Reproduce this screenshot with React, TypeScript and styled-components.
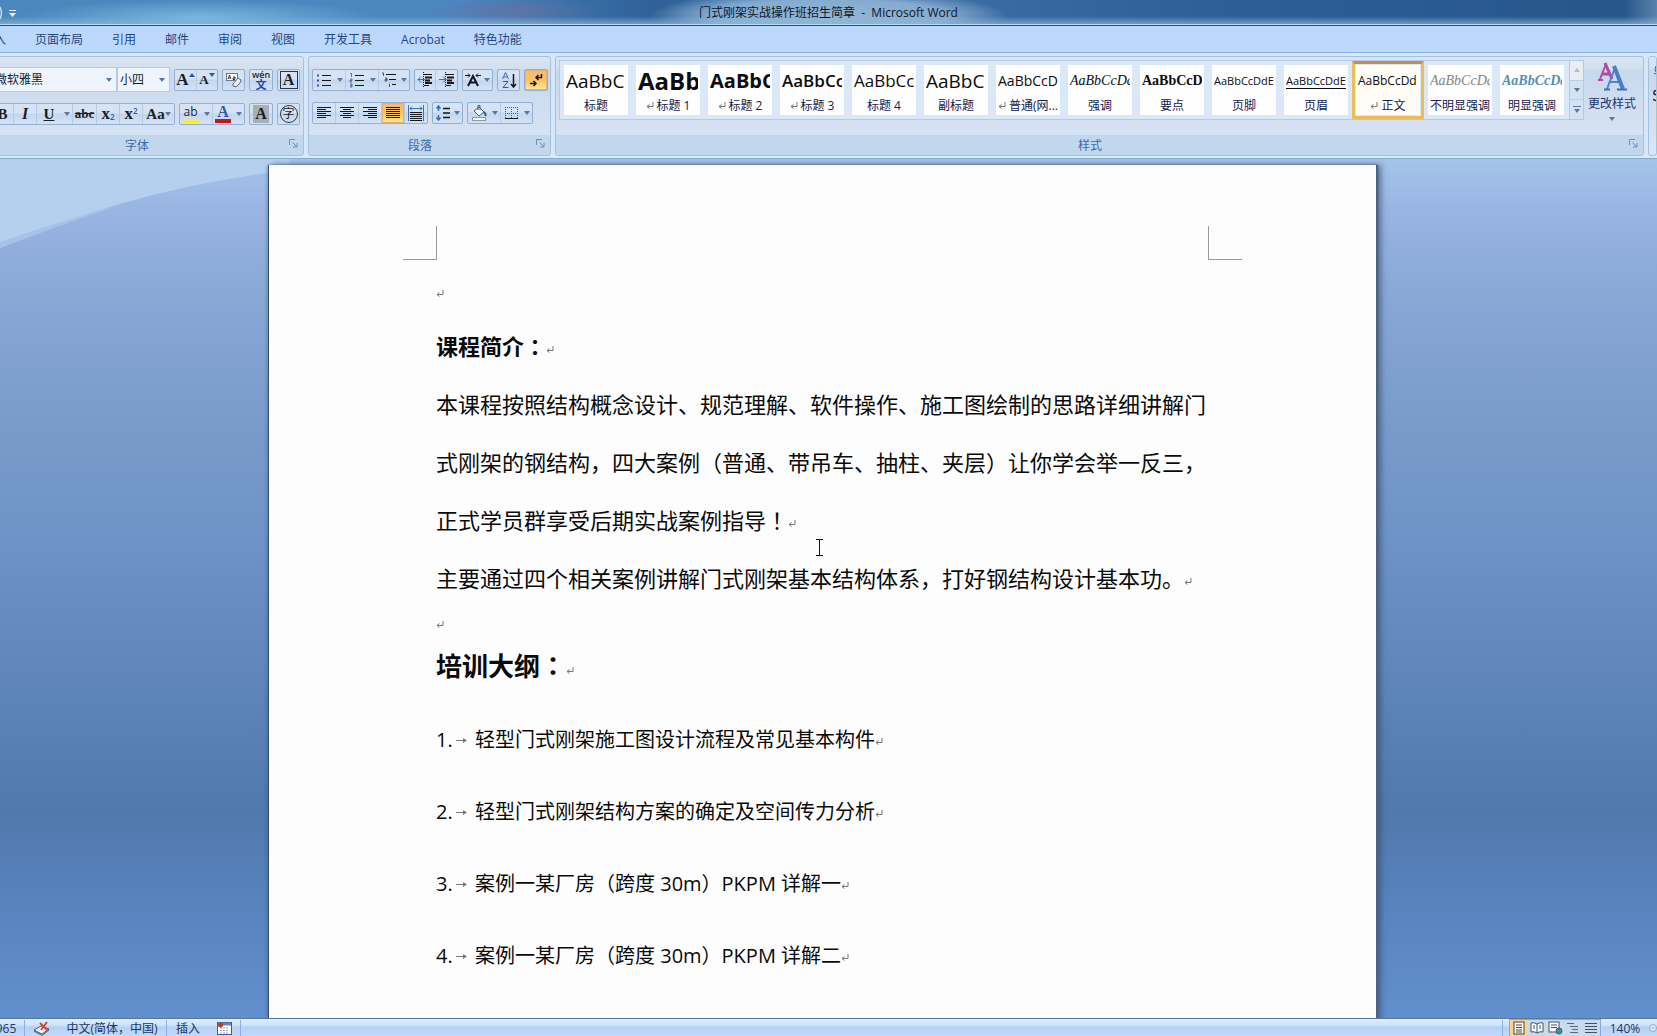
import React from "react";
import styled, { createGlobalStyle, css } from "styled-components";

const ui = `"Open Sans", "Noto Sans CJK SC", sans-serif`;
const serif = `"Liberation Serif", "Noto Sans CJK SC", serif`;

const Global = createGlobalStyle`
  * { box-sizing: border-box; }
  html, body { margin: 0; height: 100%; }
  body { font-family: ${ui}; font-size: 12px; overflow: hidden; background: #628ecb; }
  button, select { font: inherit; color: inherit; margin: 0; padding: 0; border: 0; background: none; }
`;

const Window = styled.div`
  display: flex;
  flex-direction: column;
  height: 100vh;
  overflow: hidden;
`;

/* ---------- title bar and tabs ---------- */

const TitleBar = styled.header`
  display: grid;
  grid-template-columns: 1fr auto 1fr;
  align-items: end;
  flex: none;
  height: 26px;
  border-bottom: 1px solid #2a4d75;
  box-shadow: inset 0 -1px 0 #b9dcf2;
  background:
    linear-gradient(to bottom, transparent 0 65%, rgba(140, 185, 220, 0.75) 100%),
    radial-gradient(ellipse 180px 18px at 12% 70%, rgba(130, 190, 228, 0.85), transparent),
    radial-gradient(ellipse 90px 14px at 31% 45%, rgba(100, 115, 165, 0.8), transparent),
    radial-gradient(ellipse 180px 26px at 50% 65%, rgba(150, 187, 218, 0.95) 0, rgba(145, 182, 214, 0.85) 65%, transparent),
    linear-gradient(to right, #4b86bd 0, #4c86c0 28%, #3a70a8 34%, #2f6097 40%, #3c70aa 44%, #3b6ca4 58%, #2c5f96 75%, #27568a 98%, #5a83ad 100%);
`;

const QuickAccess = styled.div`
  display: flex;
  align-items: center;
  height: 24px;
`;

const WindowTitle = styled.h1`
  margin: 0;
  padding: 0 6px;
  font-size: 12px;
  line-height: 24px;
  font-weight: 400;
  color: #10161e;
  white-space: pre;
`;

const TabStrip = styled.div`
  flex: none;
  background: #bdd8fd;
  border-bottom: 1px solid #8fb2dd;
`;

const Tabs = styled.nav`
  display: flex;
  align-items: flex-end;
  gap: 29px;
  height: 26px;
  margin-left: -6px;
`;

const Tab = styled.button`
  line-height: 24px;
  color: #1f4683;
  white-space: nowrap;
`;

/* ---------- ribbon ---------- */

const Ribbon = styled.div`
  display: flex;
  flex: none;
  gap: 4px;
  height: 106px;
  padding: 3px 0 2px;
  background: #d5e7f8;
  border-bottom: 1px solid #86a9cc;
  box-shadow: inset 0 -2px 0 #d3ecf8;
`;

const Group = styled.section<{ $width?: number; $cut?: boolean }>`
  display: flex;
  flex-direction: column;
  ${(p) => (p.$width ? `flex: none; width: ${p.$width}px;` : "flex: 1; min-width: 0;")}
  ${(p) => p.$cut && "margin-left: -11px;"}
  border: 1px solid #a5c1de;
  border-radius: 3px;
  background: linear-gradient(to bottom, #dbe5f0 0, #d2dff0 12px, #c8d8ed 13px, #d9e6f5 100%);
  overflow: hidden;
`;

const GroupBody = styled.div<{ $pad: string; $gap?: number }>`
  display: flex;
  flex: 1;
  flex-direction: column;
  gap: ${(p) => p.$gap ?? 0}px;
  padding: ${(p) => p.$pad};
`;

const GroupFooter = styled.footer`
  display: flex;
  flex: none;
  height: 20px;
  padding-right: 5px;
  background: #c1d7ee;
  color: #3e68a8;
`;

const GroupName = styled.span`
  flex: 1;
  text-align: center;
  line-height: 22px;
`;

const Launcher = styled.button`
  display: flex;
  align-items: center;
  justify-content: flex-end;
  width: 14px;
  height: 16px;
`;

const Row = styled.div<{ $end?: boolean; $tall?: boolean }>`
  display: flex;
  flex: none;
  align-items: center;
  justify-content: ${(p) => (p.$end ? "flex-end" : "flex-start")};
  gap: 4px;
  height: ${(p) => (p.$tall ? 25 : 22)}px;
`;

const Cluster = styled.div`
  display: flex;
  flex: none;
  align-items: stretch;
  height: 22px;
  border: 1px solid #93afd3;
  border-radius: 2px;
  background: linear-gradient(to bottom, #d6e3f4 0 45%, #c3d6ee 50%, #d3e3f5 100%);
`;

const Tool = styled.button<{ $w?: number; $on?: boolean; $line?: boolean }>`
  display: flex;
  align-items: center;
  justify-content: center;
  width: ${(p) => p.$w ?? 22}px;
  color: #1c1c24;
  ${(p) => p.$line && "border-right: 1px solid #b5cae4;"}
  ${(p) =>
    p.$on &&
    css`
      background: linear-gradient(to bottom, #f5b878, #fdc45e 50%, #ffe9a0);
      box-shadow: inset 0 0 0 1px #e3b070;
    `}
`;

const Glyph = styled.span<{ $size: number; $ul?: boolean; $it?: boolean; $strike?: boolean; $shade?: boolean }>`
  font-family: ${serif};
  font-weight: 700;
  font-size: ${(p) => p.$size}px;
  line-height: 18px;
  white-space: nowrap;
  ${(p) => p.$it && "font-style: italic;"}
  ${(p) => p.$ul && "text-decoration: underline;"}
  ${(p) => p.$strike && "text-decoration: line-through;"}
  ${(p) => p.$shade && "background: #a9b0b4; padding: 0 2px;"}
`;

const ScriptMark = styled.span<{ $low?: boolean }>`
  display: flex;
  align-self: ${(p) => (p.$low ? "flex-end" : "flex-start")};
  padding: 3px 0;
  font-size: 8px;
  line-height: 8px;
  font-weight: 600;
  color: #2d5b9c;
`;

const Boxed = styled.span<{ $round?: boolean }>`
  display: flex;
  align-items: center;
  justify-content: center;
  width: 18px;
  height: 18px;
  border: 1px solid #26364e;
  border-radius: ${(p) => (p.$round ? "50%" : "0")};
  font-size: 12px;
  line-height: 16px;
`;

const Ruby = styled.span`
  display: flex;
  flex-direction: column;
  align-items: center;
  font-size: 9px;
  line-height: 9px;
  font-weight: 600;
  color: #22252d;
`;

const RubyBase = styled.span`
  font-size: 11px;
  line-height: 11px;
  color: #37449a;
`;

const Swatch = styled.span<{ $bar: string; $ink: string; $serif?: boolean }>`
  display: flex;
  flex-direction: column;
  align-items: center;
  width: 16px;
  border-bottom: 4px solid ${(p) => p.$bar};
  color: ${(p) => p.$ink};
  font-family: ${(p) => (p.$serif ? serif : ui)};
  font-size: ${(p) => (p.$serif ? 16 : 12)}px;
  font-weight: ${(p) => (p.$serif ? 700 : 400)};
  line-height: 14px;
`;

const Combo = styled.label<{ $w: number }>`
  display: flex;
  align-items: center;
  width: ${(p) => p.$w}px;
  height: 25px;
  padding: 0 4px 0 2px;
  background: #edf4fd;
  border: 1px solid #b5cae6;
`;

const Select = styled.select`
  appearance: none;
  flex: 1;
  min-width: 0;
  height: 22px;
  color: #151c28;
  outline: none;
`;

const Combos = styled.div`
  display: flex;
  height: 25px;
  padding-left: 2px;
`;

/* ---------- style gallery ---------- */

const StylesBody = styled.div`
  display: flex;
  flex: 1;
  padding: 3px 3px 0;
`;

const Gallery = styled.div`
  display: flex;
  flex: 1;
  min-width: 0;
  height: 60px;
  border: 1px solid #b3cae6;
  background: #dbe8f8;
`;

const Cards = styled.div`
  display: flex;
  flex: 1;
  min-width: 0;
  overflow: hidden;
`;

const Card = styled.button<{ $on?: boolean }>`
  display: flex;
  flex-direction: column;
  flex: none;
  width: 72px;
  height: 58px;
  padding: ${(p) => (p.$on ? "1px" : "4px")};
  ${(p) =>
    p.$on &&
    css`
      border: 3px solid #edbd55;
      border-top-color: #c08f55;
      border-radius: 2px;
    `}
  background: ${(p) => (p.$on ? "#fffdf6" : "#fefefe")} content-box;
  text-align: center;
`;

const Preview = styled.span<{ $size: number; $w?: number; $serif?: boolean; $it?: boolean; $color?: string; $ul?: boolean }>`
  flex: none;
  width: 60px;
  height: 32px;
  margin: 0 2px;
  overflow: hidden;
  white-space: nowrap;
  text-align: left;
  font-family: ${(p) => (p.$serif ? serif : ui)};
  font-size: ${(p) => p.$size}px;
  line-height: 32px;
  font-weight: ${(p) => p.$w ?? 400};
  font-style: ${(p) => (p.$it ? "italic" : "normal")};
  color: ${(p) => p.$color ?? "#0c0c10"};
  ${(p) => p.$ul && "text-decoration: underline; text-underline-offset: 3px;"}
`;

const CardName = styled.span`
  display: flex;
  align-items: center;
  justify-content: center;
  gap: 3px;
  line-height: 18px;
  color: #14204a;
  white-space: nowrap;
`;

const Scroller = styled.div`
  display: flex;
  flex-direction: column;
  flex: none;
  width: 14px;
  border-left: 1px solid #b3cae6;
`;

const ScrollButton = styled.button<{ $off?: boolean }>`
  display: flex;
  flex: 1;
  align-items: center;
  justify-content: center;
  border-bottom: 1px solid #b9cee8;
  background: ${(p) => (p.$off ? "#e9eef5" : "#d3e2f5")};
  &:last-child { border-bottom: 0; }
`;

const ChangeStyles = styled.button`
  display: flex;
  flex: none;
  flex-direction: column;
  align-items: center;
  width: 56px;
  padding-top: 1px;
  color: #1f3468;
  line-height: 26px;
  white-space: nowrap;
`;

const CutTools = styled.div`
  display: flex;
  flex-direction: column;
  gap: 8px;
  padding: 8px 0 0 4px;
`;

/* ---------- workspace ---------- */

const Workspace = styled.main`
  position: relative;
  display: flex;
  flex: 1;
  justify-content: center;
  min-height: 0;
  padding: 6px 13px 0 0;
  overflow: hidden;
  background: linear-gradient(to bottom, #a4c4ea 0, #97b3e2 7%, #89a9d7 15%, #7a9ccb 30%, #6e93c6 44%, #6288bb 58%, #5079ad 76%, #5a84bf 88%, #628fcd 100%);
`;

const Swoosh = styled.svg`
  position: absolute;
  top: 0;
  left: 0;
  width: 290px;
  height: 92px;
`;

const Page = styled.article`
  position: relative;
  width: 1108px;
  height: 1500px;
  padding: 98px 167px;
  background: #fdfdfd;
  border-left: 1px solid #3a4d68;
  box-shadow: 2px 0 1px #4d627d, 5px 0 6px rgba(55, 80, 120, 0.7), -1px 0 3px rgba(55, 80, 120, 0.4);
  color: #0a0a0a;
`;

const Corner = styled.span<{ $side: "left" | "right" }>`
  position: absolute;
  top: 61px;
  ${(p) => p.$side}: 134px;
  width: 34px;
  height: 34px;
  border-bottom: 1px solid #999;
  border-${(p) => (p.$side === "left" ? "right" : "left")}: 1px solid #999;
`;

const Caret = styled.svg`
  position: absolute;
  top: 374px;
  left: 546px;
  width: 9px;
  height: 17px;
`;

const Blank = styled.p<{ $h: number }>`
  display: flex;
  align-items: center;
  height: ${(p) => p.$h}px;
  margin: 0;
  padding-top: 8px;
`;

const Heading = styled.h2<{ $size: number; $line: number; $after?: number }>`
  margin: 0 0 ${(p) => p.$after ?? 0}px;
  font-size: ${(p) => p.$size}px;
  line-height: ${(p) => p.$line}px;
  font-weight: 700;
`;

const Para = styled.p`
  margin: 0;
  font-size: 22px;
  line-height: 58px;
  white-space: nowrap;
`;

const Mid = styled.span`
  font-family: "Noto Sans CJK JP", sans-serif;
  line-height: 1;
`;

const Outline = styled.ol`
  margin: 0;
  padding: 0;
  list-style: none;
`;

const Item = styled.li`
  display: grid;
  grid-template-columns: 20px 19px 1fr;
  align-items: center;
  font-size: 20px;
  line-height: 72px;
  white-space: nowrap;
`;

/* ---------- status bar ---------- */

const Status = styled.footer`
  display: flex;
  flex: none;
  justify-content: space-between;
  height: 18px;
  padding-top: 1px;
  overflow: hidden;
  border-top: 1px solid #55789f;
  background: linear-gradient(to bottom, #e2effd 0, #c9dffa 7px, #b4d0f5 8px, #c3dbf8 100%);
  color: #1b3663;
  line-height: 17px;
`;

const StatusSide = styled.div<{ $cut?: boolean }>`
  display: flex;
  align-items: center;
  white-space: nowrap;
  ${(p) => p.$cut && "margin-left: -12px;"}
`;

const StatusCell = styled.button<{ $w: number; $line?: boolean }>`
  display: flex;
  align-items: center;
  justify-content: center;
  width: ${(p) => p.$w}px;
  height: 17px;
  ${(p) => p.$line && "border-right: 1px solid #8fb0da;"}
`;

const Views = styled.div`
  display: flex;
  margin: 0 7px 0 6px;
  border: 1px solid #8ba9cf;
`;

const Divider = styled.span`
  width: 1px;
  height: 17px;
  background: #8fb0da;
`;

const ViewButton = styled.button<{ $on?: boolean }>`
  display: flex;
  align-items: center;
  justify-content: center;
  width: 18px;
  height: 17px;
  background: ${(p) => (p.$on ? "#f8d48f" : "#c9daef")};
`;

const Zoom = styled.button`
  display: flex;
  align-items: center;
  width: 8px;
  margin-left: 7px;
  overflow: hidden;
`;

/* ---------- drawings ---------- */

const Arrow = ({ color = "#5c7699", up = false }: { color?: string; up?: boolean }) => (
  <svg width="6" height="4" viewBox="0 0 6 4" aria-hidden="true">
    <path d={up ? "M0 4L3 0L6 4Z" : "M0 0H6L3 4Z"} fill={color} />
  </svg>
);

const Mark = styled.svg`
  width: 8px;
  height: 9px;
  flex: none;
`;

const Return = () => (
  <Mark viewBox="0 0 8 9" fill="none" stroke="#777" aria-hidden="true">
    <path d="M7 0V4.500H1M3.500 2.500L1 4.500L3.500 6.500" />
  </Mark>
);

const TabMark = () => (
  <svg width="12" height="8" viewBox="0 0 12 8" aria-hidden="true">
    <path d="M0 4.500H8" stroke="#777" />
    <path d="M7 2L11 4.500L7 7Z" fill="#777" />
  </svg>
);

const Icon = ({ w = 16, children }: { w?: number; children: React.ReactNode }) => (
  <svg width={w} height="16" viewBox={`0 0 ${w} 16`} fill="none" stroke="#15151c" strokeWidth="1" aria-hidden="true">
    {children}
  </svg>
);

const lines = (rows: [number, number][]) => rows.map(([a, b], i) => `M${a} ${2.5 + i * 2}H${b}`).join("");
const LEFT: [number, number][] = [[1, 15], [1, 10], [1, 15], [1, 10], [1, 15], [1, 10]];
const CENTER: [number, number][] = [[1, 15], [4, 12], [1, 15], [4, 12], [1, 15], [4, 12]];
const RIGHT: [number, number][] = [[1, 15], [6, 15], [1, 15], [6, 15], [1, 15], [6, 15]];
const FULL: [number, number][] = [[1, 15], [1, 15], [1, 15], [1, 15], [1, 15], [1, 15]];

const LauncherIcon = () => (
  <svg width="9" height="9" viewBox="0 0 9 9" fill="none" stroke="#6c8db8" aria-hidden="true">
    <path d="M.5 6V.5H6M3.500 3.500L7.500 7.500M8 4V8H4" />
  </svg>
);

const Indent = ({ out }: { out?: boolean }) => (
  <Icon>
    <path d="M7 2.500H15M7 13.500H12" />
    <path d="M8 5.500H15M8 8.500H13M8 11H15" strokeWidth="2" />
    <path d="M6.500 0V16" strokeDasharray="1 1" />
    <path d={out ? "M8 7.500H1M4 4.500L1 7.500L4 10.500" : "M0 7.500H7M4 4.500L7 7.500L4 10.500"} stroke="#3b6db0" />
  </Icon>
);

const Footer = ({ name }: { name: string }) => (
  <GroupFooter>
    <GroupName>{name}</GroupName>
    <Launcher aria-label={name}>
      <LauncherIcon />
    </Launcher>
  </GroupFooter>
);

/* ---------- data ---------- */

const tabs = ["入", "页面布局", "引用", "邮件", "审阅", "视图", "开发工具", "Acrobat", "特色功能"];

const styles = [
  { name: "标题", text: "AaBbC", size: 19 },
  { name: "标题 1", text: "AaBbC", size: 24, w: 700, para: true },
  { name: "标题 2", text: "AaBbC", size: 20, w: 700, para: true },
  { name: "标题 3", text: "AaBbCc", size: 17, w: 600, para: true },
  { name: "标题 4", text: "AaBbCc", size: 17 },
  { name: "副标题", text: "AaBbC", size: 19 },
  { name: "普通(网...", text: "AaBbCcD", size: 14, para: true },
  { name: "强调", text: "AaBbCcDd", size: 14, serif: true, it: true },
  { name: "要点", text: "AaBbCcD", size: 14, w: 700, serif: true },
  { name: "页脚", text: "AaBbCcDdE", size: 11 },
  { name: "页眉", text: "AaBbCcDdE", size: 11, ul: true },
  { name: "正文", text: "AaBbCcDd", size: 12, para: true, on: true },
  { name: "不明显强调", text: "AaBbCcDd", size: 14, serif: true, it: true, color: "#858585" },
  { name: "明显强调", text: "AaBbCcDd", size: 14, w: 700, serif: true, it: true, color: "#5590b4" },
];

const outline = [
  "轻型门式刚架施工图设计流程及常见基本构件",
  "轻型门式刚架结构方案的确定及空间传力分析",
  "案例一某厂房（跨度 30m）PKPM 详解一",
  "案例一某厂房（跨度 30m）PKPM 详解二",
];

/* ---------- parts ---------- */

const FontGroup = () => (
  <Group $width={315} $cut>
    <GroupBody $pad="10px 3px 0 0" $gap={11}>
      <Row $tall>
        <Combos>
          <Combo $w={125}>
            <Select aria-label="字体">
              <option>微软雅黑</option>
            </Select>
            <Arrow />
          </Combo>
          <Combo $w={53}>
            <Select aria-label="字号">
              <option>小四</option>
            </Select>
            <Arrow />
          </Combo>
        </Combos>
        <Cluster>
          <Tool $line $w={22}>
            <Glyph $size={17}>A</Glyph>
            <ScriptMark><Arrow up color="#33589a" /></ScriptMark>
          </Tool>
          <Tool $w={20}>
            <Glyph $size={13}>A</Glyph>
            <ScriptMark><Arrow color="#33589a" /></ScriptMark>
          </Tool>
        </Cluster>
        <Cluster>
          <Tool $w={21} aria-label="清除格式">
            <Icon w={18}>
              <rect x="1.500" y="1.500" width="11" height="7" fill="#fff" stroke="#6b7d96" />
              <path d="M3 7L4.500 3L6 7M3.500 6H5.500M8 5H10V7.500H8V6H10" strokeWidth=".8" />
              <path d="M8 12L13 6L16 8L15 11L11 15L8 14Z" fill="#eef2f7" stroke="#5d6c83" />
            </Icon>
          </Tool>
        </Cluster>
        <Cluster>
          <Tool><Ruby>wén<RubyBase>文</RubyBase></Ruby></Tool>
        </Cluster>
        <Cluster>
          <Tool $w={21}><Boxed><Glyph $size={16}>A</Glyph></Boxed></Tool>
        </Cluster>
      </Row>
      <Row $end>
        <Cluster>
          <Tool $line $w={22}><Glyph $size={15}>B</Glyph></Tool>
          <Tool $line $w={23}><Glyph $size={16} $it>I</Glyph></Tool>
          <Tool $w={24}><Glyph $size={15} $ul>U</Glyph></Tool>
          <Tool $line $w={12}><Arrow /></Tool>
          <Tool $line $w={24}><Glyph $size={13} $strike>abc</Glyph></Tool>
          <Tool $line $w={23}><Glyph $size={17}>x</Glyph><ScriptMark $low>2</ScriptMark></Tool>
          <Tool $line $w={23}><Glyph $size={17}>x</Glyph><ScriptMark>2</ScriptMark></Tool>
          <Tool $w={31}><Glyph $size={15}>Aa</Glyph><Arrow /></Tool>
        </Cluster>
        <Cluster>
          <Tool $w={21} aria-label="突出显示">
            <Swatch $bar="#f4ec3c" $ink="#22252d">ab</Swatch>
          </Tool>
          <Tool $line $w={12}><Arrow /></Tool>
          <Tool $w={20}><Swatch $bar="#c0161c" $ink="#3f55a5" $serif>A</Swatch></Tool>
          <Tool $w={11}><Arrow /></Tool>
        </Cluster>
        <Cluster>
          <Tool><Glyph $size={16} $shade>A</Glyph></Tool>
        </Cluster>
        <Cluster>
          <Tool $w={21}><Boxed $round>字</Boxed></Tool>
        </Cluster>
      </Row>
    </GroupBody>
    <Footer name="字体" />
  </Group>
);

const ParagraphGroup = () => (
  <Group $width={243}>
    <GroupBody $pad="12px 3px 0" $gap={11}>
      <Row>
        <Cluster>
          <Tool $w={21} aria-label="项目符号">
            <Icon>
              <path d="M6 3.500H15M6 8.500H15M6 13.500H15" />
              <path d="M1 3.500H3M1 8.500H3M1 13.500H3" stroke="#33589a" strokeWidth="2" />
            </Icon>
          </Tool>
          <Tool $line $w={12}><Arrow /></Tool>
          <Tool $w={21} aria-label="编号">
            <Icon>
              <path d="M6 3.500H15M6 8.500H15M6 13.500H15" />
              <path d="M1 1.500H2.500V5M1 7H3V8.500H1V10H3M1 12H3V15H1M1 13.500H3" stroke="#33589a" strokeWidth=".8" />
            </Icon>
          </Tool>
          <Tool $line $w={12}><Arrow /></Tool>
          <Tool $w={20} aria-label="多级列表">
            <Icon>
              <path d="M5 2.500H15M8 7.500H15M11 12.500H15" />
              <path d="M1 1H2.500V4M4 6H6V9H4V7.500H6M8.500 10V10.500M8.500 12V15" stroke="#33589a" />
            </Icon>
          </Tool>
          <Tool $w={10}><Arrow /></Tool>
        </Cluster>
        <Cluster>
          <Tool $w={21} $line aria-label="减少缩进量"><Indent out /></Tool>
          <Tool $w={21} aria-label="增加缩进量"><Indent /></Tool>
        </Cluster>
        <Cluster>
          <Tool $w={19} aria-label="中文版式">
            <Icon>
              <path d="M3 14L8 4L13 14M5 10.500H11" strokeWidth="2" />
              <path d="M0 3.500H5M3 1.500L5 3.500L3 5.500M16 3.500H11M13 1.500L11 3.500L13 5.500" />
            </Icon>
          </Tool>
          <Tool $w={10}><Arrow /></Tool>
        </Cluster>
        <Cluster>
          <Tool $w={21} aria-label="排序">
            <Icon>
              <path d="M1.500 7L4.500 0.500L7.500 7M2.500 5H6.500" stroke="#3a66aa" />
              <path d="M2 9.500H7L2 15.500H7.500" stroke="#a33540" />
              <path d="M12.500 2V15M10 12L12.500 15L15 12" strokeWidth="1.500" />
            </Icon>
          </Tool>
        </Cluster>
        <Cluster>
          <Tool $on aria-label="显示编辑标记">
            <Icon>
              <path d="M13.500 2V5.500H8M10.500 3L8 5.500L10.500 8" strokeWidth="1.500" />
              <path d="M2 11.500H8M5.500 9L8 11.500L5.500 14" strokeWidth="1.500" />
            </Icon>
          </Tool>
        </Cluster>
      </Row>
      <Row>
        <Cluster>
          {[LEFT, CENTER, RIGHT, FULL].map((rows, i) => (
            <Tool key={i} $w={23} $line $on={i === 3} aria-label={["左对齐", "居中", "右对齐", "两端对齐"][i]}>
              <Icon><path d={lines(rows)} /></Icon>
            </Tool>
          ))}
          <Tool $w={22} aria-label="分散对齐">
            <Icon>
              <path d="M.5 0V16M15.500 0V16M2 3.500H14M4 1.500L2 3.500L4 5.500M12 1.500L14 3.500L12 5.500" stroke="#3b6db0" />
              <path d="M2 7.500H14M2 9.500H14M2 11.500H14M2 13.500H14M2 15.500H14" />
            </Icon>
          </Tool>
        </Cluster>
        <Cluster>
          <Tool $w={19} aria-label="行距">
            <Icon>
              <path d="M3.500 1V6M1.500 3.500L3.500 1L5.500 3.500M3.500 10V15M1.500 12.500L3.500 15L5.500 12.500" stroke="#3b6db0" strokeWidth="1.500" />
              <path d="M8 3.500H15M8 8H15M8 12.500H15" strokeWidth="1.500" />
            </Icon>
          </Tool>
          <Tool $w={10}><Arrow /></Tool>
        </Cluster>
        <Cluster>
          <Tool $w={21} aria-label="底纹">
            <Icon>
              <path d="M3 6L8 2L13 7L8 11Z" fill="#f2f5f9" stroke="#4b5870" />
              <path d="M7 5V0.500H9V5" stroke="#4b5870" />
              <path d="M13 7Q15 9 14.500 11" stroke="#2f5794" strokeWidth="2" />
              <rect x="1.500" y="12.500" width="13" height="3" fill="#fff" stroke="#8c9ab0" />
            </Icon>
          </Tool>
          <Tool $line $w={12}><Arrow /></Tool>
          <Tool $w={20} aria-label="边框">
            <Icon>
              <path d="M2.500 2V13M8.500 2V13M14.500 2V13M2 2.500H15M2 8.500H15" strokeDasharray="1 1" stroke="#4c5a75" />
              <path d="M2 13.500H15" />
            </Icon>
          </Tool>
          <Tool $w={11}><Arrow /></Tool>
        </Cluster>
      </Row>
    </GroupBody>
    <Footer name="段落" />
  </Group>
);

const StylesGroup = () => (
  <Group>
    <StylesBody>
      <Gallery>
        <Cards>
          {styles.map((s) => (
            <Card key={s.name} $on={s.on}>
              <Preview $size={s.size} $w={s.w} $serif={s.serif} $it={s.it} $color={s.color} $ul={s.ul}>
                {s.text}
              </Preview>
              <CardName>
                {s.para && <Return />}
                {s.name}
              </CardName>
            </Card>
          ))}
        </Cards>
        <Scroller>
          <ScrollButton $off aria-label="上一行"><Arrow up color="#b4bcc8" /></ScrollButton>
          <ScrollButton aria-label="下一行"><Arrow /></ScrollButton>
          <ScrollButton aria-label="其他">
            <svg width="8" height="7" viewBox="0 0 8 7" aria-hidden="true">
              <path d="M0 0H8V1H0ZM1 3H7L4 7Z" fill="#5c7699" />
            </svg>
          </ScrollButton>
        </Scroller>
      </Gallery>
      <ChangeStyles>
        <svg width="30" height="30" viewBox="0 0 30 30" fill="none" aria-hidden="true">
          <path d="M3 18L9 3" stroke="#b04aa5" strokeWidth="2" />
          <path d="M8 2L15 18M5 13H13" stroke="#b04aa5" strokeWidth="3" />
          <path d="M1 19H6" stroke="#b04aa5" strokeWidth="2" />
          <path d="M10 28L18 7M13 21H22" stroke="#4a86cc" strokeWidth="2" />
          <path d="M17 5L26 28" stroke="#4a7fc4" strokeWidth="4" />
          <path d="M7 28.500H13M20 28.500H30" stroke="#3a6fb8" strokeWidth="2" />
        </svg>
        更改样式
        <Arrow />
      </ChangeStyles>
    </StylesBody>
    <Footer name="样式" />
  </Group>
);

const App = () => (
  <>
    <Global />
    <Window>
      <TitleBar>
        <QuickAccess>
          <svg width="17" height="16" viewBox="0 0 17 16" fill="none" aria-hidden="true">
            <path d="M0 2Q3 8 0 14" stroke="#c9dcec" strokeWidth="1.500" />
            <path d="M9 5.500H16" stroke="#e8f3fb" />
            <path d="M9 8H16L12.500 12Z" fill="#e8f3fb" />
          </svg>
        </QuickAccess>
        <WindowTitle>{"门式刚架实战操作班招生简章  -  Microsoft Word"}</WindowTitle>
        <span />
      </TitleBar>
      <TabStrip>
        <Tabs>
          {tabs.map((t) => (
            <Tab key={t}>{t}</Tab>
          ))}
        </Tabs>
      </TabStrip>
      <Ribbon>
        <FontGroup />
        <ParagraphGroup />
        <StylesGroup />
        <Group $width={9}>
          <CutTools>
            <Icon>
              <circle cx="6" cy="4" r="4" stroke="#47648f" />
              <path d="M1 9Q6 6 11 9" stroke="#47648f" />
            </Icon>
            <Icon>
              <path d="M7 2Q0 0 1 5Q7 7 6 10Q3 13 0 10" stroke="#2c2f38" strokeWidth="1.500" />
            </Icon>
          </CutTools>
        </Group>
      </Ribbon>
      <Workspace>
        <Swoosh viewBox="0 0 290 92" preserveAspectRatio="none" aria-hidden="true">
          <path d="M0 0H290V11Q130 30 0 89Z" fill="#b5cfee" />
          <path d="M0 83Q60 62 120 46Q60 66 0 89Z" fill="#a5c3e9" />
        </Swoosh>
        <Page>
          <Corner $side="left" />
          <Corner $side="right" />
          <Blank $h={54}><Return /></Blank>
          <Heading $size={22} $line={58}>课程简介<Mid>：</Mid><Return /></Heading>
          <Para>
            本课程按照结构概念设计、规范理解、软件操作、施工图绘制的思路详细讲解门
            <br />
            式刚架的钢结构，四大案例（普通、带吊车、抽柱、夹层）让你学会举一反三，
            <br />
            正式学员群享受后期实战案例指导<Mid>！</Mid><Return />
          </Para>
          <Para>主要通过四个相关案例讲解门式刚架基本结构体系，打好钢结构设计基本功。<Return /></Para>
          <Blank $h={28}><Return /></Blank>
          <Heading $size={26} $line={62} $after={7}>培训大纲<Mid>：</Mid><Return /></Heading>
          <Outline>
            {outline.map((text, i) => (
              <Item key={i}>
                <span>{i + 1}.</span>
                <TabMark />
                <span>{text}<Return /></span>
              </Item>
            ))}
          </Outline>
          <Caret viewBox="0 0 9 17" fill="none" stroke="#111" aria-hidden="true">
            <path d="M1 .5H8M1 16.500H8M4.500 .5V16.500" />
          </Caret>
        </Page>
      </Workspace>
      <Status>
        <StatusSide $cut>
          <StatusCell $w={37} $line>965</StatusCell>
          <StatusCell $w={33} aria-label="校对">
            <svg width="18" height="15" viewBox="0 0 18 15" aria-hidden="true">
              <path d="M1 9L8 5L16 8L9 13Z" fill="#f4f6fa" stroke="#42587e" />
              <path d="M1 10L9 14.500L16 9" fill="none" stroke="#42587e" />
              <path d="M7 2L14 9M14 1L8 9" stroke="#cf4a3c" strokeWidth="2" />
            </svg>
          </StatusCell>
          <StatusCell $w={109} $line>中文(简体，中国)</StatusCell>
          <StatusCell $w={42}>插入</StatusCell>
          <StatusCell $w={32} $line aria-label="宏">
            <svg width="15" height="13" viewBox="0 0 15 13" aria-hidden="true">
              <rect x=".5" y=".5" width="14" height="12" fill="#fff" stroke="#3c5d92" />
              <path d="M1 2H14" stroke="#5d86c4" strokeWidth="3" />
              <path d="M3 6H12M3 8.500H12M3 11H12" stroke="#8fa6c8" strokeDasharray="2 1" />
              <circle cx="3.500" cy="3" r="2.500" fill="#c0392b" />
            </svg>
          </StatusCell>
        </StatusSide>
        <StatusSide>
          <Divider />
          <Views>
            <ViewButton $on aria-label="页面视图">
              <Icon><rect x="3" y="2" width="10" height="12" fill="#fff" stroke="#4a4334" /><path d="M5 5H11M5 7.500H11M5 10H11M5 12H11" stroke="#4a4334" /></Icon>
            </ViewButton>
            <ViewButton aria-label="阅读版式">
              <Icon><path d="M8 4Q5 2 2 3V12Q5 11 8 13Q11 11 14 12V3Q11 2 8 4V13M4 6H6M4 8H6M10 6H12M10 8H12" fill="#fff" stroke="#44536c" /></Icon>
            </ViewButton>
            <ViewButton aria-label="Web 版式">
              <Icon><rect x="2" y="2" width="10" height="10" fill="#fff" stroke="#44536c" /><path d="M4 5H10M4 7.500H10" stroke="#44536c" /><circle cx="12" cy="11" r="3" fill="#4c8f8a" stroke="#2e5f86" /></Icon>
            </ViewButton>
            <ViewButton aria-label="大纲视图">
              <Icon><path d="M2 3.500H9M5 6.500H13M7 9.500H13M5 12.500H13" stroke="#55657f" /></Icon>
            </ViewButton>
            <ViewButton aria-label="普通视图">
              <Icon><path d="M2 3.500H14M2 6.500H14M2 9.500H14M2 12.500H14" stroke="#3f4d66" /></Icon>
            </ViewButton>
          </Views>
          <StatusCell $w={34}>140%</StatusCell>
          <Zoom aria-label="缩小">
            <svg width="14" height="14" viewBox="0 0 14 14" fill="#e6effa" stroke="#56759f" aria-hidden="true">
              <circle cx="7" cy="7" r="6" />
              <path d="M4 7H10" />
            </svg>
          </Zoom>
        </StatusSide>
      </Status>
    </Window>
  </>
);

export default App;
